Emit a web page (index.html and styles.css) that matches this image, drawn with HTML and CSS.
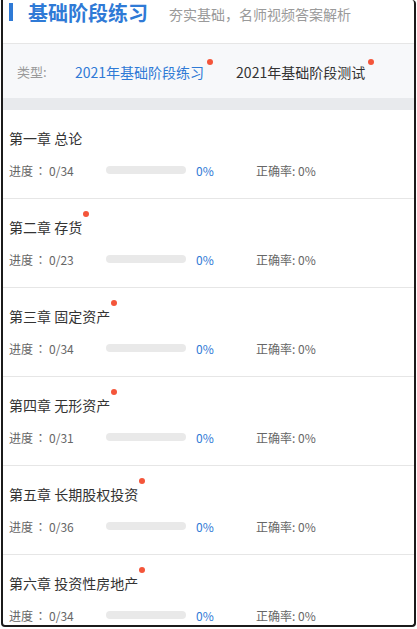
FILE: index.html
```html
<!DOCTYPE html>
<html lang="zh-CN">
  <head>
    <meta charset="UTF-8" />
    <title>基础阶段练习</title>
    <link rel="stylesheet" href="styles.css">
  </head>

  <body>
    <div class="frame">
      <!-- 상단 제목 -->
      <div class="header">
        <span class="bar"></span>
        <h1 class="title">基础阶段练习</h1>
        <span class="sub">夯实基础，名师视频答案解析</span>
      </div>

      <!-- 类型 탭 -->
      <div class="tabs">
        <span class="tab-label">类型:</span>
        <span class="tab active dot">2021年基础阶段练习</span>
        <span class="tab dot">2021年基础阶段测试</span>
      </div>

      <div class="band"></div>

      <div class="list">
        <div class="item">
          <div class="name"><span>第一章 总论</span></div>
          <div class="row">
            <span class="prog">进度<span class="colon">：</span>0/34</span>
            <span class="track"></span>
            <span class="pct">0%</span>
            <span class="rate">正确率: 0%</span>
          </div>
        </div>
        <div class="item">
          <div class="name"><span class="dot">第二章 存货</span></div>
          <div class="row">
            <span class="prog">进度<span class="colon">：</span>0/23</span>
            <span class="track"></span>
            <span class="pct">0%</span>
            <span class="rate">正确率: 0%</span>
          </div>
        </div>
        <div class="item">
          <div class="name"><span class="dot">第三章 固定资产</span></div>
          <div class="row">
            <span class="prog">进度<span class="colon">：</span>0/34</span>
            <span class="track"></span>
            <span class="pct">0%</span>
            <span class="rate">正确率: 0%</span>
          </div>
        </div>
        <div class="item">
          <div class="name"><span class="dot">第四章 无形资产</span></div>
          <div class="row">
            <span class="prog">进度<span class="colon">：</span>0/31</span>
            <span class="track"></span>
            <span class="pct">0%</span>
            <span class="rate">正确率: 0%</span>
          </div>
        </div>
        <div class="item">
          <div class="name"><span class="dot">第五章 长期股权投资</span></div>
          <div class="row">
            <span class="prog">进度<span class="colon">：</span>0/36</span>
            <span class="track"></span>
            <span class="pct">0%</span>
            <span class="rate">正确率: 0%</span>
          </div>
        </div>
        <div class="item">
          <div class="name"><span class="dot">第六章 投资性房地产</span></div>
          <div class="row">
            <span class="prog">进度<span class="colon">：</span>0/34</span>
            <span class="track"></span>
            <span class="pct">0%</span>
            <span class="rate">正确率: 0%</span>
          </div>
        </div>
      </div>
    </div>
  </body>
</html>
```

FILE: styles.css
```css
* {
    box-sizing: border-box;
    margin: 0;
    padding: 0;
}
body {
    background-color: white;
    font-family: "Noto Sans CJK SC", "Noto Sans", sans-serif;
}
.frame {
    width: 415px;
    height: 627px;
    margin-left: 1px;
    border: 2px solid #1b1b1b;
    border-top: none;
    border-radius: 0 4px 4px 4px;
    overflow: hidden;
    background-color: white;
}

/* 제목 영역 */
.header {
    height: 44px;
    display: flex;
    align-items: flex-start;
    padding-top: 3px;
    border-bottom: 1px solid #e6e6e6;
}
.bar {
    width: 4px;
    height: 18px;
    margin-left: 6px;
    background-color: #2f7ad6;
}
.title {
    margin-left: 15px;
    font-size: 20px;
    line-height: 19px;
    font-weight: bold;
    color: #2f7ad6;
}
.sub {
    margin-left: 21px;
    margin-top: 2px;
    font-size: 14px;
    line-height: 18px;
    color: #9a9a9a;
}

/* 탭 */
.tabs {
    height: 54px;
    display: flex;
    align-items: center;
    padding-left: 14px;
    padding-top: 1px;
    background-color: #f7f8fa;
    font-size: 14px;
    line-height: 20px;
}
.tab-label {
    color: #999;
    width: 58px;
    font-size: 13px;
}
.tab {
    color: #333;
    margin-right: 32px;
}
.tab.active {
    color: #2f7ad6;
}
.dot {
    position: relative;
}
.dot::after {
    content: "";
    position: absolute;
    width: 6px;
    height: 6px;
    border-radius: 50%;
    background-color: #f4553a;
}
.tab.dot::after {
    right: -9px;
    top: -3px;
}
.band {
    height: 12px;
    background-color: #e8eaed;
}

/* 챕터 리스트 */
.item {
    padding: 18px 6px 18px 6px;
    border-bottom: 1px solid #e6e6e6;
}
.name {
    font-size: 14px;
    line-height: 20px;
    color: #333;
}
.name .dot::after {
    right: -7px;
    top: -6px;
}
.row {
    margin-top: 12px;
    display: flex;
    align-items: center;
    height: 20px;
    font-size: 12px;
    color: #666;
}
.prog {
    width: 97px;
}
/* 전각 콜론을 가운데 정렬 */
.colon {
    display: inline-block;
    width: 15px;
    margin-right: 1px;
    text-align: center;
    font-family: "Noto Sans CJK JP", sans-serif;
}
.track {
    width: 80px;
    height: 8px;
    border-radius: 4px;
    background-color: #e9e9e9;
}
.pct {
    width: 60px;
    margin-left: 10px;
    color: #2f7ad6;
}
.rate {
    color: #666;
}
```
